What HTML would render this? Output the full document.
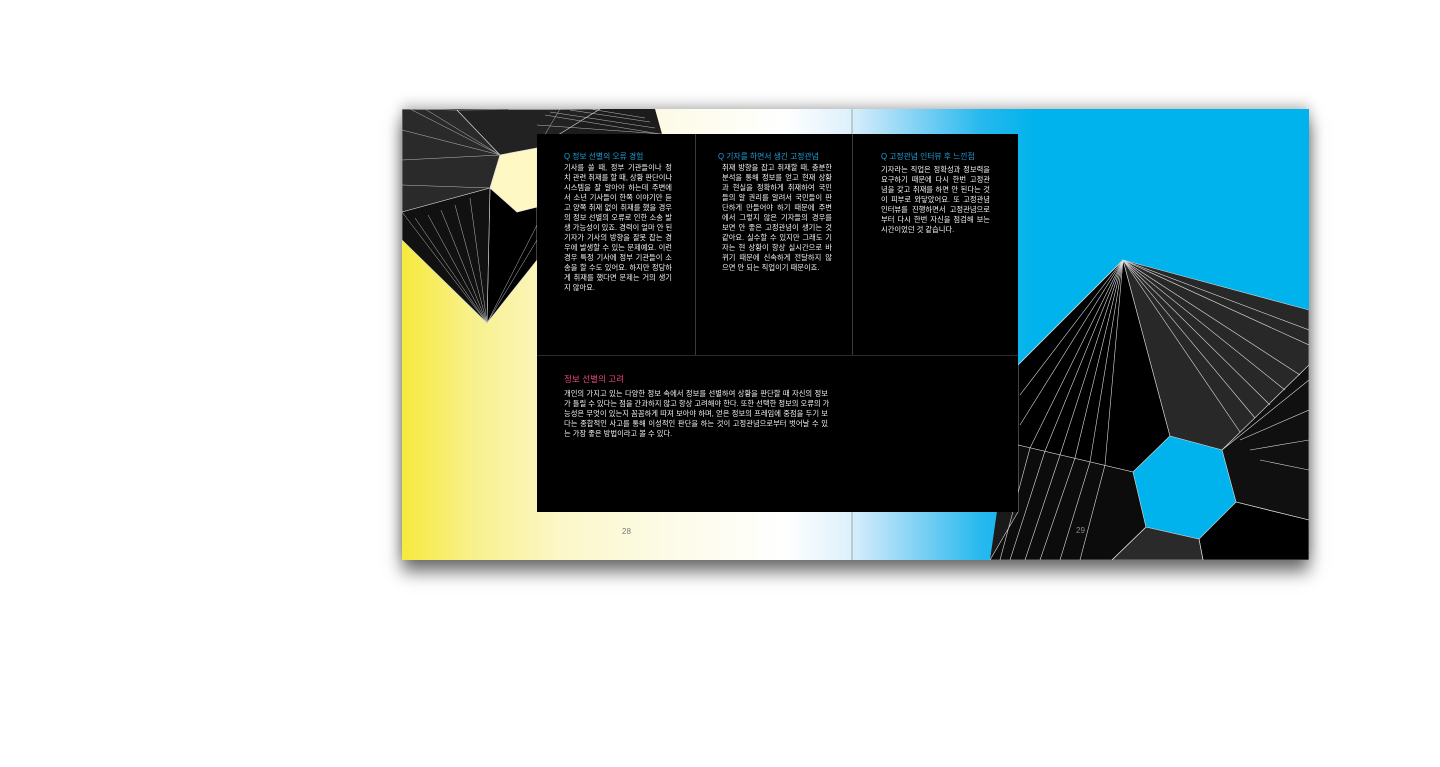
<!DOCTYPE html>
<html><head><meta charset="utf-8">
<style>
html,body{margin:0;padding:0;background:#fff;width:1440px;height:767px;overflow:hidden;position:relative;font-family:"Liberation Sans","Noto Sans CJK KR",sans-serif}
.book{position:absolute;left:402px;top:109px;width:907px;height:451px;box-shadow:0 12px 16px rgba(0,0,0,.55),0 -4px 12px rgba(0,0,0,.25);overflow:hidden}
.lp{position:absolute;left:0;top:0;width:450px;height:451px;background:linear-gradient(90deg,#f6ea3c 0%,#f8f08a 15%,#fbf7c8 35%,#fdfbe8 60%,#fff 85%,#dcf0fb 100%)}
.rp{position:absolute;left:450px;top:0;width:457px;height:451px;background:linear-gradient(90deg,#d8eefb 0%,#8fd6f5 12%,#28b9ee 28%,#00b3ec 40%,#00b3ec 100%)}
.spine{position:absolute;left:449px;top:0;width:2px;height:451px;background:rgba(0,0,0,.15)}
svg{position:absolute;left:0;top:0}
.box{position:absolute;left:537px;top:134px;width:481px;height:378px;background:#000}
.vl{position:absolute;top:134px;width:1px;height:221px;background:#3a3a3a}
.hl{position:absolute;left:537px;top:355px;width:481px;height:1px;background:#2a2a2a}
.col{position:absolute;color:#f2f2f2;font-size:7.3px;line-height:10px}
.col div{text-align:justify;text-align-last:justify;white-space:nowrap}
.col div.l{text-align-last:left}
.t{position:absolute;color:#1e9fd8;font-size:7.8px}
.pn{position:absolute;color:#777;font-size:8px}
</style></head><body>
<div class="book">
<div class="lp"></div><div class="rp"></div><div class="spine"></div>
</div>
<svg width="1440" height="767" viewBox="0 0 1440 767">
<defs><clipPath id="c"><rect x="402" y="109" width="907" height="451"/></clipPath></defs>
<g clip-path="url(#c)" stroke="#ddd" stroke-width="0.6">
<polygon points="402,109 655,109 662,134 537,134 537,260 487,323 402,240" fill="#1c1c1c" stroke="none"/>
<polygon points="402,109 457,110 500,155 490,188 402,212" fill="#2a2a2a"/>
<polygon points="457,110 600,109 537,148 500,155" fill="#222"/>
<polygon points="490,188 517,212 537,207 537,260 487,323" fill="#000"/>
<polygon points="490,188 487,323 402,240 402,212" fill="#111"/>
<polygon points="500,155 537,148 537,207 517,212 490,188" fill="#fdf8c4" stroke="#ddd"/>
<g stroke="#bbb" stroke-width="0.5">
<line x1="402" y1="212" x2="487" y2="323"/><line x1="415" y1="218" x2="487" y2="323"/><line x1="428" y1="215" x2="487" y2="323"/><line x1="441" y1="210" x2="487" y2="323"/><line x1="455" y1="205" x2="487" y2="323"/><line x1="470" y1="198" x2="487" y2="323"/>
<line x1="500" y1="155" x2="410" y2="109"/><line x1="500" y1="155" x2="425" y2="109"/><line x1="500" y1="155" x2="402" y2="130"/><line x1="500" y1="155" x2="402" y2="160"/><line x1="490" y1="188" x2="402" y2="185"/>
<line x1="537" y1="148" x2="560" y2="109"/><line x1="545" y1="115" x2="660" y2="134"/><line x1="550" y1="112" x2="655" y2="128"/><line x1="570" y1="110" x2="650" y2="122"/><line x1="590" y1="109" x2="645" y2="118"/><line x1="537" y1="125" x2="662" y2="134"/>
<line x1="537" y1="240" x2="487" y2="323"/><line x1="537" y1="225" x2="487" y2="323"/>
</g>
<polygon points="1123,260 1309,310 1309,560 990,560 1018,365" fill="#1a1a1a" stroke="none"/>
<polygon points="1123,260 1170,436 1133,472 1018,445 1018,365" fill="#000"/>
<polygon points="1123,260 1309,310 1309,365 1222,450 1170,436" fill="#282828"/>
<polygon points="1222,450 1309,365 1309,520 1236,502" fill="#101010"/>
<polygon points="1236,502 1309,520 1309,560 1203,560 1199,539" fill="#000"/>
<polygon points="1146,527 1199,539 1203,560 1112,560" fill="#2a2a2a"/>
<polygon points="1018,445 1133,472 1146,527 1112,560 990,560 1018,512" fill="#0c0c0c"/>
<polygon points="1170,436 1222,450 1236,502 1199,539 1146,527 1133,472" fill="#00b3ec" stroke="#ccc"/>
<g stroke="#ddd" stroke-width="0.6">
<line x1="1123" y1="260" x2="1018" y2="365"/><line x1="1123" y1="260" x2="1030" y2="448"/><line x1="1123" y1="260" x2="1045" y2="451"/><line x1="1123" y1="260" x2="1060" y2="455"/><line x1="1123" y1="260" x2="1075" y2="458"/><line x1="1123" y1="260" x2="1090" y2="462"/><line x1="1123" y1="260" x2="1105" y2="465"/><line x1="1123" y1="260" x2="1020" y2="395"/><line x1="1123" y1="260" x2="1020" y2="425"/>
<line x1="1123" y1="260" x2="1309" y2="330"/><line x1="1123" y1="260" x2="1309" y2="345"/><line x1="1123" y1="260" x2="1300" y2="375"/><line x1="1123" y1="260" x2="1285" y2="390"/><line x1="1123" y1="260" x2="1270" y2="405"/><line x1="1123" y1="260" x2="1255" y2="418"/><line x1="1123" y1="260" x2="1240" y2="432"/>
<line x1="1222" y1="450" x2="1309" y2="380"/><line x1="1240" y1="440" x2="1309" y2="410"/><line x1="1250" y1="450" x2="1309" y2="440"/><line x1="1260" y1="460" x2="1309" y2="470"/>
<line x1="1236" y1="502" x2="1309" y2="520"/><line x1="1146" y1="527" x2="1112" y2="560"/><line x1="1199" y1="539" x2="1203" y2="560"/>
<line x1="1030" y1="448" x2="1000" y2="560"/><line x1="1045" y1="451" x2="1010" y2="560"/><line x1="1060" y1="455" x2="1025" y2="560"/><line x1="1075" y1="458" x2="1040" y2="560"/><line x1="1090" y1="462" x2="1060" y2="560"/><line x1="1105" y1="465" x2="1080" y2="560"/>
</g>
</g>
</svg>
<div class="box"></div>
<div class="vl" style="left:695px"></div><div class="vl" style="left:852px"></div>
<div class="hl"></div>

<div class="t" style="left:564px;top:151px">Q 정보 선별의 오류 경험</div>
<div class="col" style="left:564px;top:163px;width:108px">
<div>기사를 쓸 때, 정부 기관들이나 정</div><div>치 관련 취재를 할 때, 상황 판단이나</div><div>시스템을 잘 알아야 하는데 주변에</div><div>서 소년 기사들이 한쪽 이야기만 듣</div><div>고 양쪽 취재 없이 취재를 했을 경우</div><div>의 정보 선별의 오류로 인한 소송 발</div><div>생 가능성이 있죠. 경력이 얼마 안 된</div><div>기자가 기사의 방향을 잘못 잡는 경</div><div>우에 발생할 수 있는 문제예요. 이런</div><div>경우 특정 기사에 정부 기관들이 소</div><div>송을 할 수도 있어요. 하지만 정당하</div><div>게 취재를 했다면 문제는 거의 생기</div><div class="l">지 않아요.</div>
</div>

<div class="t" style="left:718px;top:151px">Q 기자를 하면서 생긴 고정관념</div>
<div class="col" style="left:722px;top:163px;width:110px">
<div>취재 방향을 잡고 취재할 때, 충분한</div><div>분석을 통해 정보를 얻고 현재 상황</div><div>과 현실을 정확하게 취재하여 국민</div><div>들의 알 권리를 알려서 국민들이 판</div><div>단하게 만들어야 하기 때문에 주변</div><div>에서 그렇지 않은 기자들의 경우를</div><div>보면 안 좋은 고정관념이 생기는 것</div><div>같아요. 실수할 수 있지만 그래도 기</div><div>자는 현 상황이 항상 실시간으로 바</div><div>뀌기 때문에 신속하게 전달하지 않</div><div class="l">으면 안 되는 직업이기 때문이죠.</div>
</div>

<div class="t" style="left:881px;top:151px">Q 고정관념 인터뷰 후 느낀점</div>
<div class="col" style="left:881px;top:165px;width:109px">
<div>기자라는 직업은 정확성과 정보력을</div><div>요구하기 때문에 다시 한번 고정관</div><div>념을 갖고 취재를 하면 안 된다는 것</div><div>이 피부로 와닿았어요. 또 고정관념</div><div>인터뷰를 진행하면서 고정관념으로</div><div>부터 다시 한번 자신을 점검해 보는</div><div class="l">시간이었던 것 같습니다.</div>
</div>

<div class="t" style="left:564px;top:373px;color:#e0457b;font-size:8.6px">정보 선별의 고려</div>
<div class="col" style="left:564px;top:389px;width:264px;line-height:10px">
<div>개인의 가지고 있는 다양한 정보 속에서 정보를 선별하여 상황을 판단할 때 자신의 정보</div><div>가 틀릴 수 있다는 점을 간과하지 않고 항상 고려해야 한다. 또한 선택한 정보의 오류의 가</div><div>능성은 무엇이 있는지 꼼꼼하게 따져 보아야 하며, 얻은 정보의 프레임에 중점을 두기 보</div><div>다는 종합적인 사고를 통해 이성적인 판단을 하는 것이 고정관념으로부터 벗어날 수 있</div><div class="l">는 가장 좋은 방법이라고 볼 수 있다.</div>
</div>

<div class="pn" style="left:622px;top:527px">28</div>
<div class="pn" style="left:1076px;top:526px;color:#888">29</div>
</body></html>
